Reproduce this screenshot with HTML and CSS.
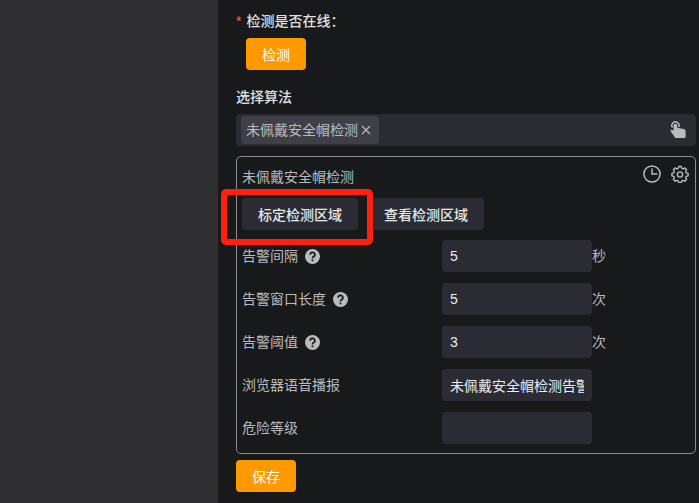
FILE: index.html
```
<!DOCTYPE html>
<html lang="zh-CN">
<head>
  <meta charset="UTF-8" />
  <meta name="viewport" content="width=device-width, initial-scale=1" />
  <title>选择算法</title>
  <link rel="stylesheet" href="styles.css">
</head>
<body>
  <div class="mask"></div>

  <form class="drawer">
    <div class="online">
      <p class="title"><span class="required">*</span>检测是否在线：</p>
      <button type="button" class="btn btn-primary">检测</button>
    </div>

    <h2 class="title">选择算法</h2>
    <div class="select-box">
      <span class="tag">未佩戴安全帽检测
        <button type="button" class="tag-close" aria-label="移除">
          <svg width="10" height="10" viewBox="0 0 10 10"><path d="M1 1l8 8M9 1l-8 8" stroke="currentColor" stroke-width="1.2" fill="none"/></svg>
        </button>
      </span>
      <button type="button" class="icon-btn" aria-label="选择算法">
        <svg width="16" height="18" viewBox="0 0 16 18">
          <path d="M2.5 6.6A3.6 3.6 0 1 1 8.7 6" fill="none" stroke="currentColor" stroke-width="1.5"/>
          <path d="M3.6 4.6a1.8 1.8 0 0 1 3.6 0V6.8l6.6 1.1q1.8.4 1.8 2v5.3l-.4 1.8H5.4L.8 10.6Q0 9 1.4 8.7q.9-.1 2.2 1z" fill="currentColor"/>
        </svg>
      </button>
    </div>

    <section class="card">
      <div class="card-head">
        <h3>未佩戴安全帽检测</h3>
        <div class="card-tools">
          <button type="button" class="icon-btn" aria-label="时间">
            <svg width="18" height="18" viewBox="0 0 18 18" fill="none" stroke="currentColor" stroke-width="1.5"><circle cx="9" cy="9" r="8.1"/><path d="M9 3.5V9h5.5"/></svg>
          </button>
          <button type="button" class="icon-btn" aria-label="设置">
            <svg width="18" height="18" viewBox="0 0 18 18" fill="none" stroke="currentColor" stroke-width="1.4" stroke-linejoin="round">
              <path d="M7.8 1.5h2.4l.6 1.9 1.3.5 1.8-.9 1.7 1.7-.9 1.8.5 1.3 1.9.6v2.4l-1.9.6-.5 1.3.9 1.8-1.7 1.7-1.8-.9-1.3.5-.6 1.9H7.8l-.6-1.9-1.3-.5-1.8.9-1.7-1.7.9-1.8-.5-1.3-1.9-.6V8.4l1.9-.6.5-1.3-.9-1.8L4.1 3l1.8.9 1.3-.5z"/>
              <circle cx="9" cy="9.5" r="2.6"/>
            </svg>
          </button>
        </div>
      </div>

      <div class="actions">
        <span class="marked"><button type="button" class="btn">标定检测区域</button></span>
        <button type="button" class="btn">查看检测区域</button>
      </div>

      <div class="row">
        <div class="name">
          <label for="interval">告警间隔</label>
          <svg class="help" viewBox="0 0 14 14"><circle cx="7" cy="7" r="7"/><path d="M4.8 5.3a2.2 2.1 0 1 1 3.3 1.8Q7 7.7 7 8.8M7 9.9v1.6"/></svg>
        </div>
        <input type="text" id="interval" value="5">
        <span>秒</span>
      </div>
      <div class="row">
        <div class="name">
          <label for="windowLength">告警窗口长度</label>
          <svg class="help" viewBox="0 0 14 14"><circle cx="7" cy="7" r="7"/><path d="M4.8 5.3a2.2 2.1 0 1 1 3.3 1.8Q7 7.7 7 8.8M7 9.9v1.6"/></svg>
        </div>
        <input type="text" id="windowLength" value="5">
        <span>次</span>
      </div>
      <div class="row">
        <div class="name">
          <label for="threshold">告警阈值</label>
          <svg class="help" viewBox="0 0 14 14"><circle cx="7" cy="7" r="7"/><path d="M4.8 5.3a2.2 2.1 0 1 1 3.3 1.8Q7 7.7 7 8.8M7 9.9v1.6"/></svg>
        </div>
        <input type="text" id="threshold" value="3">
        <span>次</span>
      </div>
      <div class="row">
        <div class="name"><label for="voice">浏览器语音播报</label></div>
        <input type="text" id="voice" value="未佩戴安全帽检测告警">
      </div>
      <div class="row">
        <div class="name"><label for="level">危险等级</label></div>
        <input type="text" id="level">
      </div>
    </section>

    <button type="submit" class="btn btn-primary">保存</button>
  </form>
</body>
</html>
```
FILE: styles.css
```
* {
  box-sizing: border-box;
}

body {
  margin: 0;
  min-height: 100vh;
  display: flex;
  background: #18191a;
  color: #bbb;
  font: 14px/20px "Liberation Sans", "Noto Sans CJK SC", sans-serif;
}

.mask {
  flex: 0 0 218px;
  background: #2f2f31;
}

.drawer {
  flex: 1;
  min-width: 0;
  padding: 11px 3px 11px 18px;
}

.title {
  margin: 0;
  color: #e0e0e0;
  font-size: 14px;
  font-weight: 500;
}

.required {
  margin-right: 5px;
  color: #f56c4c;
}

.online {
  margin-bottom: 17px;
}

.online .btn {
  margin: 7px 0 0 10px;
}

button,
input {
  font: inherit;
  border: none;
}

button {
  cursor: pointer;
}

.btn {
  display: block;
  height: 32px;
  padding: 2px 16px 0;
  border-radius: 4px;
  background: #2b2b34;
  color: #e8e8e8;
  font-weight: 500;
}

.btn-primary {
  background: #ff9900;
  color: #fff;
  font-weight: 400;
}

.select-box {
  display: flex;
  align-items: center;
  justify-content: space-between;
  height: 32px;
  margin: 7px 0 10px;
  padding: 0 10px 0 5px;
  border-radius: 4px;
  background: #2b2b34;
}

.tag {
  display: flex;
  align-items: center;
  gap: 3px;
  height: 28px;
  padding: 0 8px 0 5px;
  border-radius: 4px;
  background: #3f4047;
}

.tag-close,
.icon-btn {
  display: flex;
  padding: 0;
  background: none;
  color: #bbb;
}

.card {
  margin-bottom: 6px;
  padding: 8px 5px 9px;
  border: 1px solid #8c8d90;
  border-radius: 5px;
}

.card-head {
  display: flex;
  justify-content: space-between;
}

.card-head h3 {
  margin: 2px 0 0;
  font-size: 14px;
  font-weight: 400;
}

.card-tools {
  display: flex;
  align-items: flex-start;
  gap: 10px;
  padding-right: 1px;
}

.actions {
  display: flex;
  gap: 10px;
  margin: 11px 0 10px;
}

.marked {
  position: relative;
}

/* red frame round the calibrate button */
.marked::after {
  content: "";
  position: absolute;
  inset: -9px -15px -15px -21px;
  border: 6px solid #ff2010;
  border-radius: 5px;
  pointer-events: none;
}

.row {
  display: flex;
  align-items: center;
}

.row + .row {
  margin-top: 11px;
}

.name {
  display: flex;
  align-items: center;
  gap: 7px;
  flex: 0 0 200px;
}

.help {
  width: 15px;
  height: 15px;
  fill: #bbb;
}

.help path {
  fill: none;
  stroke: #18191a;
  stroke-width: 1.6;
}

.row input {
  width: 150px;
  height: 32px;
  padding: 0 8px;
  border-radius: 4px;
  background: #2b2b34;
  color: #eee;
}
```
